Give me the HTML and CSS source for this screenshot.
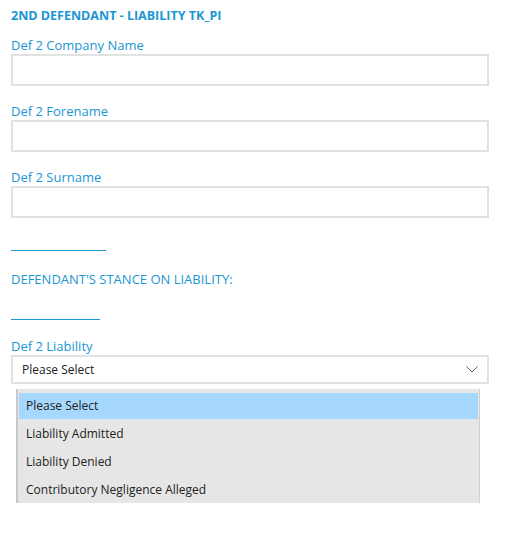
FILE: index.html
```html
<!DOCTYPE html>
<html lang="en">
<head>
  <meta charset="UTF-8">
  <meta name="viewport" content="width=device-width, initial-scale=1.0">
  <title>2nd Defendant - Liability</title>
  <link rel="stylesheet" href="styles.css">
</head>
<body>

<div class="form">
  <h2 class="section-title">2ND DEFENDANT - LIABILITY TK_PI</h2>

  <div class="field">
    <label for="company">Def 2 Company Name</label>
    <input type="text" id="company">
  </div>

  <div class="field">
    <label for="forename">Def 2 Forename</label>
    <input type="text" id="forename">
  </div>

  <div class="field">
    <label for="surname">Def 2 Surname</label>
    <input type="text" id="surname">
  </div>

  <div class="rule rule-long"></div>
  <p class="stance">DEFENDANT'S STANCE ON LIABILITY:</p>
  <div class="rule rule-short"></div>

  <div class="field field-select">
    <label>Def 2 Liability</label>
    <div class="select">
      <span>Please Select</span>
      <svg class="chevron" width="12" height="7" viewBox="0 0 12 7">
        <path d="M0.5 0.5 L6 6 L11.5 0.5" fill="none" stroke="#666" stroke-width="1"/>
      </svg>
    </div>
    <ul class="dropdown">
      <li class="selected">Please Select</li>
      <li>Liability Admitted</li>
      <li>Liability Denied</li>
      <li>Contributory Negligence Alleged</li>
    </ul>
  </div>
</div>

</body>
</html>
```

FILE: styles.css
```css
body {
  margin: 0;
  padding: 0;
  background-color: #fff;
  font-family: "Open Sans", "Noto Sans", sans-serif;
}
.form {
  width: 478px;
  padding: 7px 0 0 11px;
}
.section-title {
  margin: 0 0 12px;
  font-size: 12.5px;
  font-weight: bold;
  color: #1a96d4;
  line-height: 17px;
}
.field {
  margin-bottom: 16px;
}
.field label {
  display: block;
  font-size: 13px;
  color: #1a96d4;
  line-height: 18px;
  margin-bottom: 0;
}
.field input[type="text"] {
  display: block;
  box-sizing: border-box;
  width: 100%;
  height: 32px;
  margin: 0;
  border: 2px solid #e2e2e2;
  background: #fff;
}
.rule {
  height: 1px;
  background-color: #1a96d4;
}
.rule-long {
  width: 95px;
  margin-top: 32px;
}
.stance {
  margin: 19px 0 31px;
  font-size: 13px;
  color: #1a96d4;
  line-height: 18px;
}
.rule-short {
  width: 89px;
}
.field-select {
  margin-top: 17px;
}
.select {
  box-sizing: border-box;
  height: 29px;
  border: 2px solid #e2e2e2;
  display: flex;
  align-items: center;
  justify-content: space-between;
  padding: 0 9px 0 9px;
  font-size: 12px;
  color: #222;
}
.dropdown {
  list-style: none;
  margin: 5px 9px 0 5px;
  padding: 4px 1px 0 1px;
  background-color: #e6e6e6;
  border-left: 2px solid #c8c8c8;
  border-right: 1px solid #d0d0d0;
  height: 110px;
}
.dropdown li {
  height: 28px;
  line-height: 26px;
  padding-left: 7px;
  font-size: 12px;
  color: #222;
}
.dropdown li.selected {
  background-color: #a6d8fd;
  height: 26px;
  margin-bottom: 2px;
}
```
